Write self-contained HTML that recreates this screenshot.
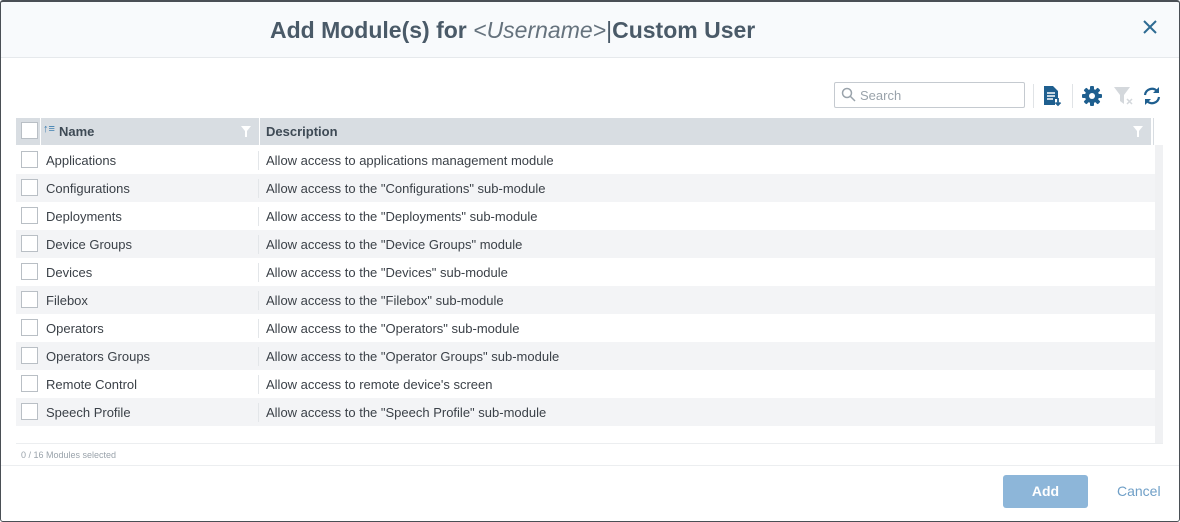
<!DOCTYPE html>
<html><head><meta charset="utf-8"><style>
*{box-sizing:border-box;margin:0;padding:0}
body{width:1180px;height:522px;background:#fff;font-family:"Liberation Sans",sans-serif;position:relative;overflow:hidden}
.dlg{position:absolute;left:0;top:0;width:1180px;height:522px;background:#fff}
.frame{position:absolute;left:0;top:0;width:1180px;height:522px;border:1px solid #4a4f55;border-top:2px solid #4a4f55;border-radius:3px;z-index:5}
.hdr{position:absolute;left:0;top:0;width:1180px;height:58px;background:#f8fafc;border-bottom:1px solid #e6e9ec}
.title{position:absolute;left:270px;top:17px;font-size:23px;font-weight:bold;color:#4a5a68;white-space:nowrap}
.title i{font-weight:normal;color:#65727d}
.abs{position:absolute}
.search{left:834px;top:82px;width:191px;height:26px;border:1px solid #c5cad0;border-radius:2px;font-size:13px;color:#9aa3ab;padding:5px 0 0 25px}
.th{left:16px;top:118px;width:1138px;height:27px;background:#d8dde2}
.th span{position:absolute;top:6px;font-size:13px;font-weight:bold;color:#3e4a55}
.cb{position:absolute;width:17px;height:17px;border:1px solid #b9bfc5;background:#fff}
.row{position:absolute;left:16px;width:1139px;height:28px;font-size:13px;color:#3b4148}
.row.s{background:#f3f4f6}
.row .n{position:absolute;left:30px;top:7px}
.row .d{position:absolute;left:250px;top:7px}
.row .sep{position:absolute;left:242px;top:5px;width:1px;height:19px;background:#e3e6e9}
</style></head><body>
<div class="frame"></div>
<div class="dlg">
<div class="hdr"><div class="title">Add Module(s) for <i>&lt;Username&gt;</i><span style="font-weight:normal;color:#4a5a68">|</span>Custom User</div>
<svg class="abs" style="left:1143px;top:20px" width="14" height="14" viewBox="0 0 14 14"><path d="M1 1L13 13M13 1L1 13" stroke="#2e6b93" stroke-width="2"/></svg>
</div>
<div class="abs search">Search</div>
<svg class="abs" style="left:841px;top:87px" width="15" height="15" viewBox="0 0 15 15"><circle cx="6" cy="6" r="4.5" fill="none" stroke="#9aa3ab" stroke-width="1.5"/><path d="M9.5 9.5L14 14" stroke="#9aa3ab" stroke-width="1.5"/></svg>
<div class="abs" style="left:1033px;top:84px;width:1px;height:24px;background:#e0e3e6"></div>
<div class="abs" style="left:1072px;top:84px;width:1px;height:24px;background:#e0e3e6"></div>
<svg class="abs" style="left:1042px;top:85px" width="20" height="22" viewBox="0 0 20 22"><path d="M2 1h9l5 5v8h-3v6H2z" fill="#1f5f8f"/><path d="M5 8h8M5 11h8M5 14h6" stroke="#fff" stroke-width="1.4"/><path d="M16 13v7M13.5 17.5L16 20l2.5-2.5" stroke="#1f5f8f" stroke-width="1.8" fill="none"/></svg>
<svg class="abs" style="left:1081px;top:85px" width="22" height="22" viewBox="0 0 22 22"><g fill="#1f5f8f"><circle cx="11" cy="11" r="7"/><rect x="9" y="1" width="4" height="20" rx="1"/><rect x="9" y="1" width="4" height="20" rx="1" transform="rotate(45 11 11)"/><rect x="9" y="1" width="4" height="20" rx="1" transform="rotate(90 11 11)"/><rect x="9" y="1" width="4" height="20" rx="1" transform="rotate(135 11 11)"/></g><circle cx="11" cy="11" r="3" fill="#fff"/></svg>
<svg class="abs" style="left:1113px;top:86px" width="22" height="20" viewBox="0 0 22 20"><path d="M1 1h16l-6 8v9l-4-3V9z" fill="#d4d8dc"/><path d="M14 13l5 5M19 13l-5 5" stroke="#d4d8dc" stroke-width="1.5"/></svg>
<svg class="abs" style="left:1142px;top:86px" width="20" height="20" viewBox="0 0 20 20"><path d="M3 9a7 7 0 0 1 12-4" fill="none" stroke="#1f5f8f" stroke-width="2.2"/><path d="M17 1v6h-6z" fill="#1f5f8f"/><path d="M17 11a7 7 0 0 1-12 4" fill="none" stroke="#1f5f8f" stroke-width="2.2"/><path d="M3 19v-6h6z" fill="#1f5f8f"/></svg>
<div class="abs th">
<div class="cb" style="left:5px;top:4px"></div>
<div style="position:absolute;left:24px;top:0;width:1px;height:27px;background:#fff"></div>
<span style="left:27px;top:5px;font-weight:normal;font-size:11px;color:#3f7fb0">↑≡</span>
<span style="left:43px">Name</span>
<svg style="position:absolute;left:225px;top:8px" width="10" height="11" viewBox="0 0 10 11"><path d="M0 0h10L6 5v6H4V5z" fill="#fff"/></svg>
<div style="position:absolute;left:243px;top:0;width:1px;height:27px;background:#fff"></div>
<span style="left:250px">Description</span>
<svg style="position:absolute;left:1117px;top:8px" width="10" height="11" viewBox="0 0 10 11"><path d="M0 0h10L6 5v6H4V5z" fill="#fff"/></svg>
<div style="position:absolute;left:1135px;top:0;width:2px;height:27px;background:#fff"></div>
</div>
<div class="abs" style="left:1155px;top:145px;width:8px;height:298px;background:#f0f1f3"></div>

<div class="row" style="top:146px"><div class="cb" style="left:5px;top:5px"></div><span class="n">Applications</span><div class="sep"></div><span class="d">Allow access to applications management module</span></div>
<div class="row s" style="top:174px"><div class="cb" style="left:5px;top:5px"></div><span class="n">Configurations</span><div class="sep"></div><span class="d">Allow access to the "Configurations" sub-module</span></div>
<div class="row" style="top:202px"><div class="cb" style="left:5px;top:5px"></div><span class="n">Deployments</span><div class="sep"></div><span class="d">Allow access to the "Deployments" sub-module</span></div>
<div class="row s" style="top:230px"><div class="cb" style="left:5px;top:5px"></div><span class="n">Device Groups</span><div class="sep"></div><span class="d">Allow access to the "Device Groups" module</span></div>
<div class="row" style="top:258px"><div class="cb" style="left:5px;top:5px"></div><span class="n">Devices</span><div class="sep"></div><span class="d">Allow access to the "Devices" sub-module</span></div>
<div class="row s" style="top:286px"><div class="cb" style="left:5px;top:5px"></div><span class="n">Filebox</span><div class="sep"></div><span class="d">Allow access to the "Filebox" sub-module</span></div>
<div class="row" style="top:314px"><div class="cb" style="left:5px;top:5px"></div><span class="n">Operators</span><div class="sep"></div><span class="d">Allow access to the "Operators" sub-module</span></div>
<div class="row s" style="top:342px"><div class="cb" style="left:5px;top:5px"></div><span class="n">Operators Groups</span><div class="sep"></div><span class="d">Allow access to the "Operator Groups" sub-module</span></div>
<div class="row" style="top:370px"><div class="cb" style="left:5px;top:5px"></div><span class="n">Remote Control</span><div class="sep"></div><span class="d">Allow access to remote device's screen</span></div>
<div class="row s" style="top:398px"><div class="cb" style="left:5px;top:5px"></div><span class="n">Speech Profile</span><div class="sep"></div><span class="d">Allow access to the "Speech Profile" sub-module</span></div>

<div class="abs" style="left:16px;top:443px;width:1147px;height:1px;background:#eceef0"></div>
<div class="abs" style="left:21px;top:450px;font-size:9px;color:#9aa3ab">0 / 16 Modules selected</div>
<div class="abs" style="left:0;top:465px;width:1180px;height:1px;background:#eceef0"></div>
<div class="abs" style="left:1003px;top:475px;width:85px;height:33px;background:#8db6d9;border-radius:3px;color:#fff;font-size:14px;font-weight:bold;text-align:center;line-height:33px">Add</div>
<div class="abs" style="left:1117px;top:483px;font-size:14px;color:#6f9fc7">Cancel</div>
</div>
</body></html>
